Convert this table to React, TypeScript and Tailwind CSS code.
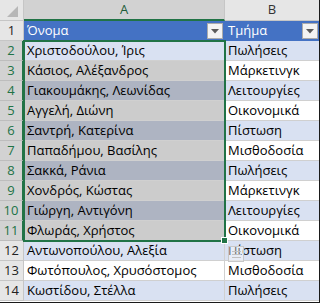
import React from "react";

const rows: [string, string][] = [
  ["Χριστοδούλου, Ίρις", "Πωλήσεις"],
  ["Κάσιος, Αλέξανδρος", "Μάρκετινγκ"],
  ["Γιακουμάκης, Λεωνίδας", "Λειτουργίες"],
  ["Αγγελή, Διώνη", "Οικονομικά"],
  ["Σαντρή, Κατερίνα", "Πίστωση"],
  ["Παπαδήμου, Βασίλης", "Μισθοδοσία"],
  ["Σακκά, Ράνια", "Πωλήσεις"],
  ["Χονδρός, Κώστας", "Μάρκετινγκ"],
  ["Γιώργη, Αντιγόνη", "Λειτουργίες"],
  ["Φλωράς, Χρήστος", "Οικονομικά"],
  ["Αντωνοπούλου, Αλεξία", "Πίστωση"],
  ["Φωτόπουλος, Χρυσόστομος", "Μισθοδοσία"],
  ["Κωστίδου, Στέλλα", "Πωλήσεις"],
];

function Drop() {
  return (
    <div className="absolute right-[1px] top-[2px] w-[16px] h-[16px] bg-[#f3f3f3] border border-[#ababab] flex items-center justify-center">
      <svg width="8" height="5" viewBox="0 0 8 5">
        <path d="M0 0 L8 0 L4 4.5 Z" fill="#5a5a5a" />
      </svg>
    </div>
  );
}

export default function App() {
  return (
    <div
      className="relative w-[320px] h-[303px] bg-white border-r border-b border-[#1a1a1a] overflow-hidden text-[13px] text-black"
      style={{ fontFamily: '"Open Sans", "Noto Sans", sans-serif' }}
    >
      <div className="grid grid-cols-[24px_201px_94px]">
        {/* header row */}
        <div className="relative h-[21px] bg-[#e6e6e6] border-r border-b border-[#c6c6c6]">
          <svg className="absolute right-[5px] bottom-[3px]" width="11" height="11" viewBox="0 0 11 11">
            <path d="M11 0 L11 11 L0 11 Z" fill="#b7b7b7" />
          </svg>
        </div>
        <div className="h-[21px] bg-[#d2d2d2] border-r border-[#c6c6c6] border-b-2 border-b-[#217346] flex items-center justify-center text-[#1d5c38]">
          A
        </div>
        <div className="h-[21px] bg-[#e6e6e6] border-b border-[#c6c6c6] flex items-center justify-center text-[#333]">
          B
        </div>

        {/* row 1 header row of table */}
        <div className="h-[20px] bg-[#e6e6e6] border-r border-b border-[#c6c6c6] flex items-center justify-center text-[#222]">
          1
        </div>
        <div className="relative h-[20px] bg-[#4472c4] border-r border-b border-[#4472c4] text-white pl-[3px] flex items-center">
          Όνομα
          <Drop />
        </div>
        <div className="relative h-[20px] bg-[#4472c4] border-b border-[#4472c4] text-white pl-[3px] flex items-center">
          Τμήμα
          <Drop />
        </div>

        {rows.map(([name, dept], i) => {
          const r = i + 2;
          const blue = r % 2 === 0;
          const sel = r >= 2 && r <= 11;
          let aBg = blue ? "bg-[#d9e1f2]" : "bg-white";
          if (sel && r !== 2) aBg = blue ? "bg-[#aeb4c2]" : "bg-[#cccccc]";
          const bBg = blue ? "bg-[#d9e1f2]" : "bg-white";
          return (
            <React.Fragment key={r}>
              <div
                className={
                  sel
                    ? "h-[20px] bg-[#d2d2d2] border-b border-[#bdbdbd] border-r-2 border-r-[#217346] flex items-center justify-center text-[#217346]"
                    : "h-[20px] bg-[#e6e6e6] border-r border-b border-[#c6c6c6] flex items-center justify-center text-[#222]"
                }
              >
                {r}
              </div>
              <div className={`h-[20px] ${aBg} border-r border-b border-[#d0d0d0] pl-[3px] flex items-center whitespace-nowrap overflow-hidden`}>
                {name}
              </div>
              <div className={`h-[20px] ${bBg} border-b border-[#d0d0d0] pl-[3px] flex items-center whitespace-nowrap overflow-hidden`}>
                {dept}
              </div>
            </React.Fragment>
          );
        })}
      </div>

      {/* selection rectangle */}
      <div className="absolute left-[23px] top-[40px] w-[203px] h-[202px] border-2 border-[#217346] pointer-events-none" />
      {/* fill handle */}
      <div className="absolute left-[221px] top-[237px] w-[7px] h-[7px] bg-[#217346] border border-white" />
      {/* quick analysis ghost icon */}
      <div className="absolute left-[228px] top-[246px] w-[16px] h-[16px] border border-[#c8c8c8] bg-white/40 flex flex-col items-center justify-center gap-[2px]">
        <div className="w-[9px] h-[1px] bg-[#c0c0c0]" />
        <div className="w-[9px] h-[1px] bg-[#c0c0c0]" />
        <div className="w-[9px] h-[1px] bg-[#c0c0c0]" />
      </div>
    </div>
  );
}
